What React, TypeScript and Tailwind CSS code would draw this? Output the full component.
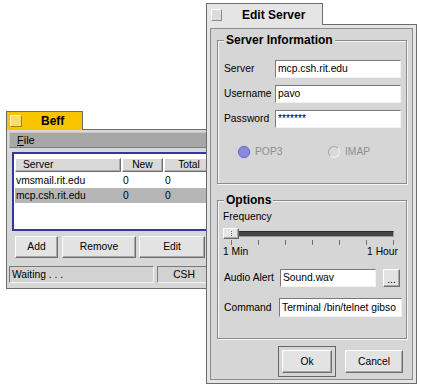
import React from 'react';

const raised =
  'border border-t-white border-l-white border-r-[#6e6e6e] border-b-[#6e6e6e] shadow-[inset_-1px_-1px_0_#a9a9a9]';
const sunken = 'border border-t-[#7a7a7a] border-l-[#7a7a7a] border-r-[#f4f4f4] border-b-[#f4f4f4]';

function Btn({ children, className = '' }: { children: React.ReactNode; className?: string }) {
  return (
    <div className={`flex items-center justify-center bg-[#e3e3e3] ${raised} ${className}`}>{children}</div>
  );
}

function Field({ value, className = '' }: { value: string; className?: string }) {
  return (
    <div className={`flex items-center overflow-hidden whitespace-nowrap bg-white pl-[2px] ${sunken} ${className}`}>
      {value}
    </div>
  );
}

function BeffWindow() {
  const rows = [
    { server: 'vmsmail.rit.edu', n: '0', t: '0', sel: false },
    { server: 'mcp.csh.rit.edu', n: '0', t: '0', sel: true },
  ];
  return (
    <div className="absolute left-[6px] top-[111px] w-[216px]">
      <div className="relative z-10 -mb-px flex h-[19px] w-[77px] items-center border border-b-0 border-[#6c6c6c] bg-[#f8c400]">
        <div className="ml-[3px] h-[12px] w-[12px] border border-t-[#fff4b8] border-l-[#fff4b8] border-r-[#a88400] border-b-[#a88400] bg-[#f7dc70]" />
        <span className="ml-[19px] text-[12px] font-bold">Beff</span>
      </div>
      <div className="h-[160px] border border-[#6c6c6c] bg-[#d7d7d7] p-[2px]">
        <div className="flex h-[16px] items-center border border-t-[#c6c6c6] border-l-[#c6c6c6] border-r-[#7e7e7e] border-b-[#7e7e7e] bg-[#a7a7a7] pl-[7px] text-[11px]">
          <span>
            <span className="underline">F</span>ile
          </span>
        </div>
        <div className="ml-[3px] mt-[4px] h-[79px] border-2 border-[#3535a6] bg-white px-[1px] pt-[4px]">
          <div className="flex h-[14px]">
            <div className={`flex w-[106px] items-center bg-[#d9d9d9] pl-[7px] ${raised}`}>Server</div>
            <div className={`ml-px flex w-[41px] items-center justify-center bg-[#d9d9d9] ${raised}`}>New</div>
            <div className={`ml-px flex w-[50px] items-center justify-center bg-[#d9d9d9] ${raised}`}>Total</div>
          </div>
          <div className="mt-px">
            {rows.map((r) => (
              <div key={r.server} className={`flex h-[15px] items-center ${r.sel ? 'bg-[#b6b6b6]' : ''}`}>
                <span className="w-[108px] pl-px">{r.server}</span>
                <span className="w-[42px]">{r.n}</span>
                <span>{r.t}</span>
              </div>
            ))}
          </div>
        </div>
        <div className="mt-[5px] flex h-[22px] pl-[6px]">
          <Btn className="w-[43px]">Add</Btn>
          <Btn className="ml-[4px] w-[74px]">Remove</Btn>
          <Btn className="ml-[3px] w-[66px]">Edit</Btn>
        </div>
        <div className="mt-[8px] flex h-[17px]">
          <div className={`flex w-[145px] items-center bg-[#d2d2d2] pl-[2px] ${sunken}`}>Waiting . . .</div>
          <div className={`ml-[3px] flex w-[54px] items-center justify-center bg-[#d2d2d2] ${sunken}`}>CSH</div>
        </div>
      </div>
    </div>
  );
}

function Group({ title, className, children }: { title: string; className: string; children: React.ReactNode }) {
  return (
    <fieldset
      className={`ml-[6px] mr-[5px] border border-[#8a8a8a] shadow-[inset_1px_1px_0_#f6f6f6,1px_1px_0_#f6f6f6] ${className}`}
    >
      <legend className="ml-[6px] bg-[#d6d6d6] px-[2px] text-[12px] font-bold leading-[14px]">{title}</legend>
      {children}
    </fieldset>
  );
}

function EditServerWindow() {
  const ticks = [0, 1, 2, 3, 4, 5, 6];
  return (
    <div className="absolute left-[206px] top-[3px] w-[211px]">
      <div className="relative z-10 -mb-px flex h-[22px] w-[117px] items-center border border-b-0 border-[#6c6c6c] bg-[#e5e5e5]">
        <div className="ml-[4px] h-[12px] w-[11px] border border-t-white border-l-white border-r-[#8a8a8a] border-b-[#8a8a8a] bg-[#dcdcdc]" />
        <span className="ml-[20px] text-[12px] font-bold">Edit Server</span>
      </div>
      <div className="h-[360px] border border-[#6c6c6c] bg-[#e5e5e5] p-[3px]">
        <div className="h-full border border-[#8c8c8c] bg-[#d6d6d6] pt-[4px]">
          <Group title="Server Information" className="h-[151px]">
            <div className="flex flex-col gap-[7px] pl-[6px] pt-[13px]">
              {[
                ['Server', 'mcp.csh.rit.edu'],
                ['Username', 'pavo'],
                ['Password', '*******'],
              ].map(([l, v]) => (
                <div key={l} className="flex h-[18px] items-center">
                  <span className="w-[51px]">{l}</span>
                  <Field value={v} className="h-[18px] w-[126px]" />
                </div>
              ))}
            </div>
            <div className="ml-[20px] mt-[18px] flex h-[12px] items-center text-[#8e8e8e]">
              <div className="flex w-[90px] items-center">
                <div className="h-[12px] w-[12px] rounded-full border border-[#6666c4] bg-[#8b8bdc] shadow-[0_0_0_1px_#c8c8ea]" />
                <span className="ml-[5px]">POP3</span>
              </div>
              <div className="flex items-center">
                <div className="h-[12px] w-[12px] rounded-full border border-t-[#a4a4a4] border-l-[#a4a4a4] border-r-[#f2f2f2] border-b-[#f2f2f2] bg-[#dadada]" />
                <span className="ml-[5px]">IMAP</span>
              </div>
            </div>
          </Group>
          <Group title="Options" className="mt-[9px] h-[146px]">
            <div className="pl-[5px] pt-[4px]">
              <div className="h-[12px] leading-[12px]">Frequency</div>
              <div className="relative mt-[5px] flex h-[11px] w-[171px] items-center">
                <div className="h-[6px] w-full border border-t-[#2a2a2a] border-l-[#2a2a2a] border-r-[#9a9a9a] border-b-[#9a9a9a] bg-[#454545]" />
                <div className={`absolute left-0 top-0 flex h-[11px] w-[16px] items-center justify-center bg-[#e6e6e6] ${raised}`}>
                  <div className="h-[5px] border-l border-dotted border-[#6a6a6a]" />
                </div>
              </div>
              <div className="mt-px flex h-[5px] w-[171px] justify-between pl-[8px]">
                {ticks.map((t) => (
                  <div key={t} className="h-[5px] w-px bg-[#707070]" />
                ))}
              </div>
              <div className="flex h-[13px] w-[175px] items-center justify-between">
                <span>1 Min</span>
                <span>1 Hour</span>
              </div>
              <div className="ml-px mt-[11px] flex h-[18px] items-center">
                <span className="w-[56px]">Audio Alert</span>
                <Field value="Sound.wav" className="h-[18px] w-[96px]" />
                <Btn className="ml-[7px] h-[18px] w-[17px] items-end pb-[2px] leading-[8px]">...</Btn>
              </div>
              <div className="ml-px mt-[11px] flex h-[19px] items-center">
                <span className="w-[55px]">Command</span>
                <Field value="Terminal /bin/telnet gibso" className="h-[19px] w-[123px]" />
              </div>
            </div>
          </Group>
          <div className="mt-[7px] flex items-center justify-end pr-[9px]">
            <div className="h-[31px] w-[58px] border border-[#666] p-[3px]">
              <Btn className="h-full w-full">Ok</Btn>
            </div>
            <Btn className="ml-[9px] h-[23px] w-[58px]">Cancel</Btn>
          </div>
        </div>
      </div>
    </div>
  );
}

export default function App() {
  return (
    <div className="relative h-[389px] w-[421px] overflow-hidden bg-white font-['Liberation_Sans',Arial,sans-serif] text-[10.3px] text-black">
      <BeffWindow />
      <EditServerWindow />
    </div>
  );
}
